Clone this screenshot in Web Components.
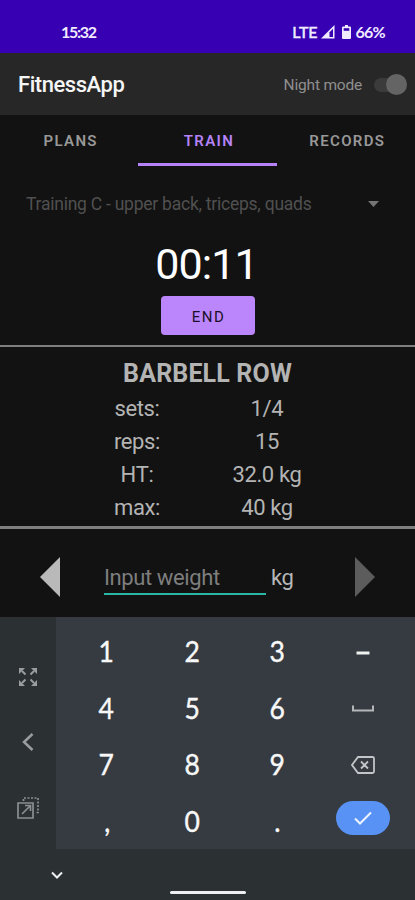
<!DOCTYPE html>
<html lang="en">
<head>
<meta charset="UTF-8">
<meta name="viewport" content="width=device-width, initial-scale=1.0">
<title>FitnessApp</title>
<style>
    body {
        margin: 0;
        background: #121212;
        font-family: Roboto, "Liberation Sans", sans-serif;
    }
</style>
</head>
<body>
<fitness-app></fitness-app>

<script>
class StatusBar extends HTMLElement {
    connectedCallback() {
        this.attachShadow({ mode: 'open' });
        this.shadowRoot.innerHTML = `
            <style>
                :host {
                    display: flex;
                    justify-content: space-between;
                    align-items: center;
                    height: 53px;
                    padding: 11px 30px 0 61px;
                    box-sizing: border-box;
                    background: #3700b3;
                    color: #f1ebff;
                    font: 700 16px/20px Lato, sans-serif;
                }
                .time { letter-spacing: -1.3px; }
                .right { display: flex; align-items: center; }
                .lte { font-weight: 400; -webkit-text-stroke: 0.5px #f1ebff; letter-spacing: -0.1px; }
                .pct { letter-spacing: -0.7px; }
                svg { display: block; }
            </style>
            <span class="time">15:32</span>
            <div class="right">
                <span class="lte">LTE</span>
                <svg width="14" height="14" viewBox="0 0 14 14" style="margin-left:4px">
                    <path d="M0 13.5L13.5 0V13.5Z" fill="currentColor"/>
                    <path d="M8.5 7.2L12 3.8V12H8.5Z" fill="#3700b3"/>
                </svg>
                <svg width="9" height="14" viewBox="0 0 9 14" style="margin:0 4px 0 7px">
                    <path d="M3 0h3v1.5h2q1 0 1 1V13q0 1-1 1H1q-1 0-1-1V2.500q0-1 1-1h2z" fill="currentColor"/>
                    <path d="M1.700 3.200h5.600v2.600H1.700z" fill="#3700b3"/>
                </svg>
                <span class="pct">66%</span>
            </div>
        `;
    }
}

class AppBar extends HTMLElement {
    connectedCallback() {
        this.attachShadow({ mode: 'open' });
        this.shadowRoot.innerHTML = `
            <style>
                :host {
                    display: flex;
                    align-items: center;
                    height: 62px;
                    padding: 1px 8px 0 18px;
                    box-sizing: border-box;
                    background: #272727;
                }
                .title {
                    flex: 1;
                    color: #f5f5f5;
                    font-size: 22px;
                    font-weight: 500;
                    letter-spacing: -0.45px;
                }
                .mode { color: #8f8f8f; font-size: 15.5px; letter-spacing: -0.2px; }
                .switch {
                    display: flex;
                    justify-content: flex-end;
                    align-items: center;
                    width: 33px;
                    height: 14px;
                    margin-left: 12px;
                    border-radius: 7px;
                    background: #3b3b3b;
                }
                .thumb {
                    flex: none;
                    width: 21px;
                    height: 21px;
                    border-radius: 50%;
                    background: #646464;
                }
            </style>
            <span class="title"><slot></slot></span>
            <span class="mode">Night mode</span>
            <div class="switch"><div class="thumb"></div></div>
        `;
    }
}

class TabItem extends HTMLElement {
    connectedCallback() {
        this.attachShadow({ mode: 'open' });
        this.shadowRoot.innerHTML = `
            <style>
                :host {
                    flex: 1;
                    display: flex;
                    align-items: center;
                    justify-content: center;
                    padding: 4px 0 0 3px;
                    border-bottom: 3px solid transparent;
                    color: #989898;
                    font-size: 15px;
                    font-weight: 600;
                    letter-spacing: 1.35px;
                }
                :host([active]) {
                    color: #b583f7;
                    border-bottom-color: #b583f7;
                }
            </style>
            <slot></slot>
        `;
    }
}

class PlanSelect extends HTMLElement {
    connectedCallback() {
        this.attachShadow({ mode: 'open' });
        this.shadowRoot.innerHTML = `
            <style>
                :host {
                    display: flex;
                    align-items: center;
                    justify-content: space-between;
                    height: 40px;
                    padding: 0 36px 0 26px;
                    color: #505050;
                    font-size: 17.5px;
                    letter-spacing: -0.24px;
                }
                svg { display: block; }
            </style>
            <span><slot></slot></span>
            <svg width="11" height="6" viewBox="0 0 11 6"><path d="M0 0H11L5.500 6Z" fill="#747474"/></svg>
        `;
    }
}

class StatRow extends HTMLElement {
    connectedCallback() {
        this.attachShadow({ mode: 'open' });
        this.shadowRoot.innerHTML = `
            <style>
                :host {
                    display: grid;
                    grid-template-columns: 130px 130px;
                    justify-content: center;
                    height: 33px;
                    margin-right: 11px;
                    color: #b4b4b4;
                    font-size: 22px;
                    letter-spacing: -0.35px;
                    line-height: 33px;
                    text-align: center;
                }
            </style>
            <span>${this.getAttribute('label')}</span>
            <span><slot></slot></span>
        `;
    }
}

class WeightInput extends HTMLElement {
    connectedCallback() {
        this.attachShadow({ mode: 'open' });
        this.shadowRoot.innerHTML = `
            <style>
                :host {
                    display: flex;
                    align-items: center;
                    height: 88px;
                    padding: 0 40px;
                    box-sizing: border-box;
                    font-size: 22px;
                    letter-spacing: -0.4px;
                }
                svg { display: block; margin-top: 8px; }
                .field {
                    width: 162px;
                    height: 31px;
                    margin: 12px 5px 0 44px;
                    box-sizing: border-box;
                    border-bottom: 2px solid #2bb5a7;
                    color: #7e7e7e;
                    line-height: 27px;
                    white-space: nowrap;
                }
                .unit { flex: 1; margin-top: 8px; color: #b8b8b8; line-height: 27px; }
            </style>
            <svg width="20" height="40" viewBox="0 0 20 40"><path d="M20 0V40L0 20Z" fill="#b9b9b9"/></svg>
            <div class="field">Input weight</div>
            <span class="unit">kg</span>
            <svg width="20" height="40" viewBox="0 0 20 40"><path d="M0 0V40L20 20Z" fill="#5c5c5c"/></svg>
        `;
    }
}

class NumPad extends HTMLElement {
    connectedCallback() {
        this.attachShadow({ mode: 'open' });
        this.shadowRoot.innerHTML = `
            <style>
                :host {
                    display: block;
                    height: 283px;
                    background: #2b3033;
                }
                .main { display: flex; height: 232px; }
                .side {
                    display: flex;
                    flex-direction: column;
                    align-items: center;
                    width: 56px;
                    padding-top: 27px;
                    box-sizing: border-box;
                }
                .side div { display: grid; place-items: center; height: 65.500px; }
                .keys {
                    flex: 1;
                    display: grid;
                    grid-template-columns: repeat(4, 1fr);
                    grid-template-rows: repeat(4, 1fr);
                    padding: 6px 9px 0 8px;
                    background: #363b41;
                    color: #f8f8f8;
                    font: 400 28.500px/34px Lato, sans-serif;
                    -webkit-text-stroke: 0.4px #f8f8f8;
                }
                .keys > * { place-self: center; }
                .keys span { transform: scaleX(0.93); }
                .enter {
                    display: grid;
                    place-items: center;
                    width: 54px;
                    height: 34px;
                    margin-top: -5px;
                    border-radius: 17px;
                    background: #5892f5;
                }
                .foot {
                    display: grid;
                    grid-template-columns: 1fr 76px 1fr;
                    height: 51px;
                }
                .foot svg { margin: 22px 0 0 51px; }
                .handle {
                    height: 3px;
                    margin-top: 42px;
                    border-radius: 2px;
                    background: #ededf2;
                }
                svg { display: block; }
            </style>
            <div class="main">
                <div class="side">
                    <div><svg width="18" height="18" viewBox="0 0 18 18" fill="#9a9da0" stroke="#9a9da0" stroke-width="1.900">
                        <path d="M3 3L6.500 6.500M15 3L11.500 6.500M3 15L6.500 11.500M15 15L11.500 11.500"/>
                        <path stroke="none" d="M0 0H6L0 6ZM18 0V6L12 0ZM0 18V12L6 18ZM18 18H12L18 12Z"/>
                    </svg></div>
                    <div><svg width="12" height="18" viewBox="0 0 12 18" fill="none" stroke="#9a9da0" stroke-width="2.500">
                        <path d="M10.500 1L2 9L10.500 17"/>
                    </svg></div>
                    <div><svg width="22" height="22" viewBox="0 0 22 22" fill="none" stroke="#8b8f92" stroke-width="1.700">
                        <path d="M1 6H16V21H1Z M5 17L14 8M8 8.500H13.500V14"/>
                        <path d="M6.500 4V1H21V15.500H18" stroke-dasharray="2 1.500"/>
                    </svg></div>
                </div>
                <div class="keys">
                    <span>1</span><span>2</span><span>3</span>
                    <svg width="14" height="4" viewBox="0 0 14 4" style="margin-top:4px"><path d="M0.500 0.500h13v3h-13z" fill="#f0f2f0"/></svg>
                    <span>4</span><span>5</span><span>6</span>
                    <svg width="22" height="7" viewBox="0 0 22 7" style="margin-top:2px"><path d="M1 0.500V5.500H21V0.500" fill="none" stroke="#b4b7ba" stroke-width="2"/></svg>
                    <span>7</span><span>8</span><span>9</span>
                    <svg width="24" height="18" viewBox="0 0 24 18" fill="none" stroke="#c3c6c8" stroke-width="1.800" style="margin-top:2px"><path d="M7 1H21.500Q23 1 23 2.500V15.500Q23 17 21.500 17H7L1 9Z M10 5.500L17 12.500M17 5.500L10 12.500"/></svg>
                    <span>,</span><span>0</span><span>.</span>
                    <div class="enter"><svg width="18" height="14" viewBox="0 0 18 14"><path d="M1 7.500L6 12.500L17 1.500" fill="none" stroke="#eef4ff" stroke-width="2"/></svg></div>
                </div>
            </div>
            <div class="foot">
                <svg width="12" height="8" viewBox="0 0 12 8"><path d="M1 1.500L6 6.500L11 1.500" fill="none" stroke="#f0f0f0" stroke-width="2"/></svg>
                <div class="handle"></div>
            </div>
        `;
    }
}

class FitnessApp extends HTMLElement {
    connectedCallback() {
        this.attachShadow({ mode: 'open' });
        this.shadowRoot.innerHTML = `
            <style>
                :host {
                    display: flex;
                    flex-direction: column;
                    width: 415px;
                    height: 900px;
                    overflow: hidden;
                    background: #121212;
                }
                nav { display: flex; height: 51px; }
                plan-select { margin-top: 18px; }
                .timer {
                    margin-top: 15px;
                    height: 50px;
                    color: #fff;
                    font-size: 43px;
                    letter-spacing: -0.9px;
                    line-height: 50px;
                    text-align: center;
                    padding-right: 2px;
                }
                .end {
                    align-self: center;
                    width: 94px;
                    height: 39px;
                    margin: 7px 0 10px;
                    padding: 2px 0 0 2px;
                    border: 0;
                    border-radius: 4px;
                    background: #bb86fc;
                    color: #1c1028;
                    font: 400 15px Roboto, sans-serif;
                    letter-spacing: 1.4px;
                }
                .exercise {
                    height: 179px;
                    border: solid #7f7f7f;
                    border-width: 2px 0 3px;
                }
                h2 {
                    margin: 11px 0 2px;
                    color: #b4b4b4;
                    font-size: 25px;
                    letter-spacing: 0.15px;
                    line-height: 32px;
                    text-align: center;
                }
            </style>
            <status-bar></status-bar>
            <app-bar>FitnessApp</app-bar>
            <nav>
                <tab-item>PLANS</tab-item>
                <tab-item active>TRAIN</tab-item>
                <tab-item>RECORDS</tab-item>
            </nav>
            <plan-select>Training C - upper back, triceps, quads</plan-select>
            <div class="timer">00:11</div>
            <button class="end">END</button>
            <section class="exercise">
                <h2>BARBELL ROW</h2>
                <stat-row label="sets:">1/4</stat-row>
                <stat-row label="reps:">15</stat-row>
                <stat-row label="HT:">32.0 kg</stat-row>
                <stat-row label="max:">40 kg</stat-row>
            </section>
            <weight-input></weight-input>
            <num-pad></num-pad>
        `;
    }
}

customElements.define('status-bar', StatusBar);
customElements.define('app-bar', AppBar);
customElements.define('tab-item', TabItem);
customElements.define('plan-select', PlanSelect);
customElements.define('stat-row', StatRow);
customElements.define('weight-input', WeightInput);
customElements.define('num-pad', NumPad);
customElements.define('fitness-app', FitnessApp);
</script>
</body>
</html>
